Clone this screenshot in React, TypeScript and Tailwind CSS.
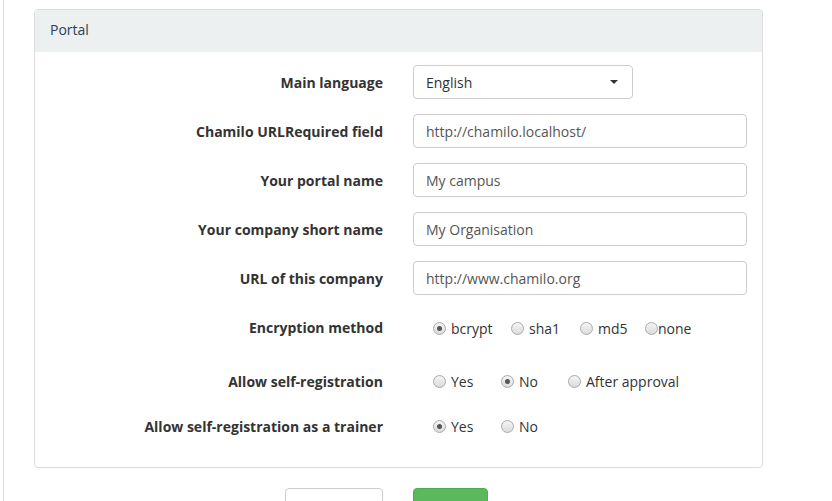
import { ReactNode } from 'react';

type Option = { label: string; checked?: boolean; width: string; gap?: string };

const encryption: Option[] = [
  { label: 'bcrypt', checked: true, width: 'w-[78px]' },
  { label: 'sha1', width: 'w-[69px]' },
  { label: 'md5', width: 'w-[65px]' },
  { label: 'none', width: 'w-[60px]', gap: 'ml-0' },
];

const selfRegistration: Option[] = [
  { label: 'Yes', width: 'w-[68px]' },
  { label: 'No', checked: true, width: 'w-[67px]' },
  { label: 'After approval', width: 'w-[120px]' },
];

const trainer: Option[] = [
  { label: 'Yes', checked: true, width: 'w-[68px]' },
  { label: 'No', width: 'w-[67px]' },
];

function Radio({ checked }: { checked?: boolean }) {
  return (
    <span className="flex h-[13px] w-[13px] shrink-0 items-center justify-center rounded-full border border-[#a9a9a9] bg-gradient-to-b from-[#f4f4f4] to-[#dcdcdc]">
      {checked && <span className="h-[5px] w-[5px] rounded-full bg-[#555]" />}
    </span>
  );
}

function RadioGroup({ options, lower }: { options: Option[]; lower?: boolean }) {
  return (
    <div className={`ml-[20px] flex items-center ${lower ? 'pt-[3px]' : ''}`}>
      {options.map((o) => (
        <label key={o.label} className={`flex items-center ${o.width}`}>
          <Radio checked={o.checked} />
          <span className={o.gap ?? 'ml-[5px]'}>{o.label}</span>
        </label>
      ))}
    </div>
  );
}

function Row({ label, children, spacing }: { label: string; children: ReactNode; spacing: string }) {
  return (
    <div className={`flex h-[34px] items-center ${spacing}`}>
      <div className="w-[363px] pr-[15px] text-right font-bold">{label}</div>
      <div className="pl-[15px]">{children}</div>
    </div>
  );
}

function TextInput({ value }: { value: string }) {
  return (
    <div className="flex h-[34px] w-[334px] items-center rounded-[4px] border border-[#ccc] px-[12px] text-[#555]">
      {value}
    </div>
  );
}

export default function App() {
  return (
    <div className="h-[501px] overflow-hidden bg-white font-['Open_Sans',sans-serif] text-[14px] text-[#333]">
      <div className="ml-[3px] h-[501px] border-l border-[#ddd] pt-[9px] pl-[30px]">
        {/* 패널 */}
        <div className="w-[729px] rounded-[4px] border border-[#ddd]">
          <div className="flex h-[42px] items-center rounded-t-[4px] bg-[#ecf0f1] px-[15px] pb-[3px] text-[#2c3e50]">
            Portal
          </div>
          <div className="pt-[13px] pb-[24px]">
            <Row label="Main language" spacing="">
              <div className="flex h-[34px] w-[220px] items-center justify-between rounded-[4px] border border-[#ccc] px-[12px] text-[#333]">
                <span>English</span>
                <span className="mr-[2px] h-0 w-0 border-x-[4px] border-t-[4px] border-x-transparent border-t-[#333]" />
              </div>
            </Row>
            <Row label="Chamilo URLRequired field" spacing="mt-[15px]">
              <TextInput value="http://chamilo.localhost/" />
            </Row>
            <Row label="Your portal name" spacing="mt-[15px]">
              <TextInput value="My campus" />
            </Row>
            <Row label="Your company short name" spacing="mt-[15px]">
              <TextInput value="My Organisation" />
            </Row>
            <Row label="URL of this company" spacing="mt-[15px]">
              <TextInput value="http://www.chamilo.org" />
            </Row>
            <Row label="Encryption method" spacing="mt-[15px]">
              <RadioGroup options={encryption} lower />
            </Row>
            <Row label="Allow self-registration" spacing="mt-[20px]">
              <RadioGroup options={selfRegistration} />
            </Row>
            <Row label="Allow self-registration as a trainer" spacing="mt-[11px]">
              <RadioGroup options={trainer} />
            </Row>
          </div>
        </div>

        {/* 버튼 */}
        <div className="mt-[20px] flex gap-[30px] pl-[251px]">
          <button className="h-[34px] w-[98px] rounded-[4px] border border-[#ccc] bg-white text-[#333]">
            « Previous
          </button>
          <button className="h-[34px] w-[75px] rounded-[4px] border border-[#4cae4c] bg-[#5cb85c] text-white">
            Next »
          </button>
        </div>
      </div>
    </div>
  );
}
